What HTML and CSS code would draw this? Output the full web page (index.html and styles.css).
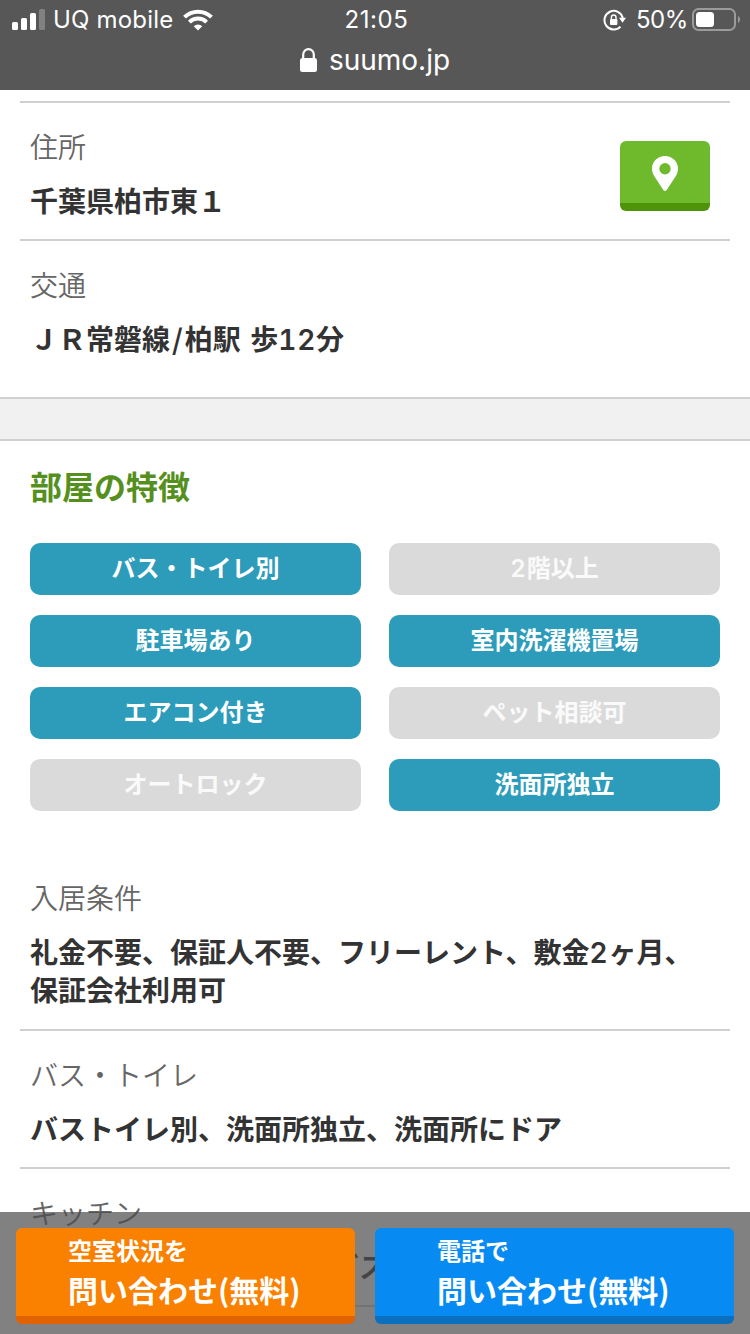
FILE: index.html
```html
<!DOCTYPE html>
<html lang="ja">
<head>
    <meta charset="UTF-8">
    <meta name="viewport" content="width=device-width, initial-scale=1.0">
    <title>物件詳細</title>
    <link rel="stylesheet" href="styles.css">
</head>
<body>
    <header class="browser-bar">
        <div class="status">
            <div class="status-left">
                <svg class="signal" width="34" height="22" viewBox="0 0 34 22" fill="#fff">
                    <rect x="0" y="13" width="6" height="8" rx="1.5"/>
                    <rect x="9" y="9" width="6" height="12" rx="1.5"/>
                    <rect x="18" y="4" width="6" height="17" rx="1.5"/>
                    <rect x="27" y="0" width="6" height="21" rx="1.5" opacity="0.25"/>
                </svg>
                <span class="carrier">UQ mobile</span>
                <svg class="wifi" width="30" height="22" viewBox="0 0 30 22" fill="none" stroke="#fff" stroke-width="4">
                    <path d="M1.500 8.200a19.200 19.200 0 0 1 27 0"/>
                    <path d="M6.400 13.100a12.300 12.300 0 0 1 17.200 0"/>
                    <path d="M10.700 17.300a6.300 6.300 0 0 1 8.600 0L15 21.600z" fill="#fff" stroke="none"/>
                </svg>
            </div>
            <span class="time">21:05</span>
            <div class="status-right">
                <svg class="rotation" width="24" height="22" viewBox="0 0 24 22">
                    <path d="M17.500 17.600A9.300 9.300 0 1 1 19.800 9" fill="none" stroke="#fff" stroke-width="2"/>
                    <path d="M16 8.800h7l-3.500 5z" fill="#fff"/>
                    <rect x="7" y="10" width="7.400" height="6" rx="1" fill="#fff"/>
                    <path d="M8.400 10.500V8.300a2.300 2.300 0 0 1 4.600 0v2.200" fill="none" stroke="#fff" stroke-width="1.400"/>
                </svg>
                <span class="percent">50%</span>
                <svg class="battery" width="49" height="24" viewBox="0 0 49 24">
                    <rect x="1" y="1" width="42" height="21" rx="5.500" fill="none" stroke="#9b9b9b" stroke-width="2"/>
                    <rect x="4" y="4" width="18" height="15" rx="3.500" fill="#fff"/>
                    <path d="M46 8c2.700 1.500 2.700 5.500 0 7z" fill="#9b9b9b"/>
                </svg>
            </div>
        </div>
        <div class="address">
            <svg width="17" height="25" viewBox="0 0 17 25">
                <rect x="0" y="10" width="17" height="14" rx="2.500" fill="#fff"/>
                <path d="M3.200 11.500V6.500a5.300 5.300 0 0 1 10.600 0v5" fill="none" stroke="#fff" stroke-width="2.200"/>
            </svg>
            <span>suumo.jp</span>
        </div>
    </header>

    <main>
        <dl class="info info-location">
            <div class="info-row has-map">
                <div>
                    <dt>住所</dt>
                    <dd>千葉県柏市東１</dd>
                </div>
                <a class="map-button" href="#" aria-label="地図">
                    <svg width="26" height="35" viewBox="0 0 26 35">
                        <path d="M13 0C5.600 0 0 5.600 0 12.700c0 3.300 1.200 5.800 2.800 8.300l8.500 13c.8 1.300 2.600 1.300 3.400 0l8.500-13c1.600-2.500 2.800-5 2.800-8.300C26 5.600 20.400 0 13 0zm0 7a5.700 5.700 0 1 1 0 11.400A5.700 5.700 0 0 1 13 7z" fill="#fff" fill-rule="evenodd"/>
                    </svg>
                </a>
            </div>
            <div class="info-row">
                <dt>交通</dt>
                <dd>ＪＲ常磐線<span class="slash">/</span>柏駅<span class="walk"> 歩</span><span class="num">12</span>分</dd>
            </div>
        </dl>

        <div class="divider"></div>

        <h2>部屋の特徴</h2>
        <ul class="features">
            <li class="on">バス・トイレ別</li>
            <li><span class="num">2</span>階以上</li>
            <li class="on">駐車場あり</li>
            <li class="on">室内洗濯機置場</li>
            <li class="on">エアコン付き</li>
            <li>ペット相談可</li>
            <li>オートロック</li>
            <li class="on">洗面所独立</li>
        </ul>

        <dl class="info info-detail">
            <div class="info-row">
                <dt>入居条件</dt>
                <dd>礼金不要、保証人不要、フリーレント、敷金<span class="num">2</span>ヶ月、<br>保証会社利用可</dd>
            </div>
            <div class="info-row">
                <dt>バス・トイレ</dt>
                <dd>バストイレ別、洗面所独立、洗面所にドア</dd>
            </div>
            <div class="info-row kitchen">
                <dt>キッチン</dt>
                <dd>ガス</dd>
            </div>
        </dl>
    </main>

    <div class="contact-bar">
        <a class="contact mail" href="#"><small>空室状況を</small>問い合わせ(無料)</a>
        <a class="contact tel" href="#"><small>電話で</small>問い合わせ(無料)</a>
    </div>
</body>
</html>
```
FILE: styles.css
```css
* {
    box-sizing: border-box;
}

body {
    margin: 0;
    height: 1334px;
    overflow: hidden;
    background: #fff;
    color: #333;
    font-family: "Noto Sans CJK JP", sans-serif;
    font-size: 28px;
    line-height: 38px;
}

svg {
    display: block;
    flex-shrink: 0;
}

a {
    color: #fff;
    text-decoration: none;
}

/* browser bar */
.browser-bar {
    height: 90px;
    background: #575757;
    color: #fff;
    font-family: Inter, sans-serif;
}

.status {
    display: grid;
    grid-template-columns: 1fr auto 1fr;
    height: 40px;
    padding: 0 9px 0 12px;
    font-size: 24px;
    line-height: 40px;
}

.status-left,
.status-right {
    display: flex;
    align-items: center;
}

.status-right {
    justify-content: flex-end;
}

.carrier {
    margin: 0 9px 0 7px;
    letter-spacing: 0.2px;
}

.time {
    letter-spacing: 0.6px;
}

.percent {
    margin: 0 4px 0 9px;
    letter-spacing: -0.4px;
}

.address {
    display: flex;
    justify-content: center;
    align-items: center;
    gap: 12px;
    height: 40px;
    font-size: 28px;
}

/* property info */
.info {
    margin: 0 20px;
}

.info-location {
    padding-top: 11px;
    height: 307px;
}

.info-row {
    padding: 24px 10px 20px;
    border-top: 2px solid #d0d0d0;
}

.has-map {
    display: flex;
    justify-content: space-between;
}

dt {
    margin-bottom: 16px;
    color: #666;
    font-weight: 350;
}

dd {
    margin: 0;
    font-weight: bold;
}

.num {
    font-family: Inter, sans-serif;
    font-weight: 600;
    font-variant-numeric: tabular-nums;
    letter-spacing: 0.8px;
    line-height: 1;
}

.slash {
    padding: 0 2px;
}

.walk {
    word-spacing: 3px;
}

.map-button {
    display: flex;
    justify-content: center;
    width: 90px;
    height: 70px;
    margin: 14px 10px 0 0;
    padding-top: 15px;
    border-radius: 6px;
    background: linear-gradient(#6fba2c 62px, #4f930a 62px);
}

.divider {
    height: 44px;
    border-top: 2px solid #d0d0d0;
    border-bottom: 2px solid #d0d0d0;
    background: #f1f1f1;
}

h2 {
    margin: 22px 30px 36px;
    color: #55901e;
    font-size: 32px;
    line-height: 44px;
}

.features {
    display: grid;
    grid-template-columns: 1fr 1fr;
    gap: 20px 28px;
    margin: 0 30px;
    padding: 0;
    list-style: none;
}

.features li {
    height: 52px;
    border-radius: 10px;
    background: #dadada;
    color: #fafafa;
    font-size: 24px;
    font-weight: bold;
    line-height: 48px;
    text-align: center;
}

.features .on {
    background: #2d9cba;
    color: #fff;
}

.info-detail {
    margin-top: 41px;
}

.info-detail .info-row:first-child {
    padding-bottom: 21px;
    border-top-color: transparent;
}

.info-detail .info-row:last-child {
    border-bottom: 2px solid #d0d0d0;
}

.kitchen dd {
    padding-left: 301px;
}

/* fixed contact buttons */
.contact-bar {
    position: fixed;
    left: 0;
    right: 0;
    bottom: 0;
    display: grid;
    grid-template-columns: 339px 359px;
    gap: 20px;
    height: 122px;
    padding: 16px 16px 10px;
    background: rgba(75, 75, 75, 0.7);
}

.contact {
    padding: 2px 0 0 52px;
    border-radius: 6px;
    font-size: 30px;
    font-weight: bold;
    line-height: 39px;
}

.contact small {
    display: block;
    font-size: 24px;
    line-height: 40px;
}

.mail {
    background: linear-gradient(#fa8000 88px, #e16200 88px);
}

.tel {
    padding-left: 62px;
    background: linear-gradient(#078bf3 88px, #0a6fbd 88px);
}
```
